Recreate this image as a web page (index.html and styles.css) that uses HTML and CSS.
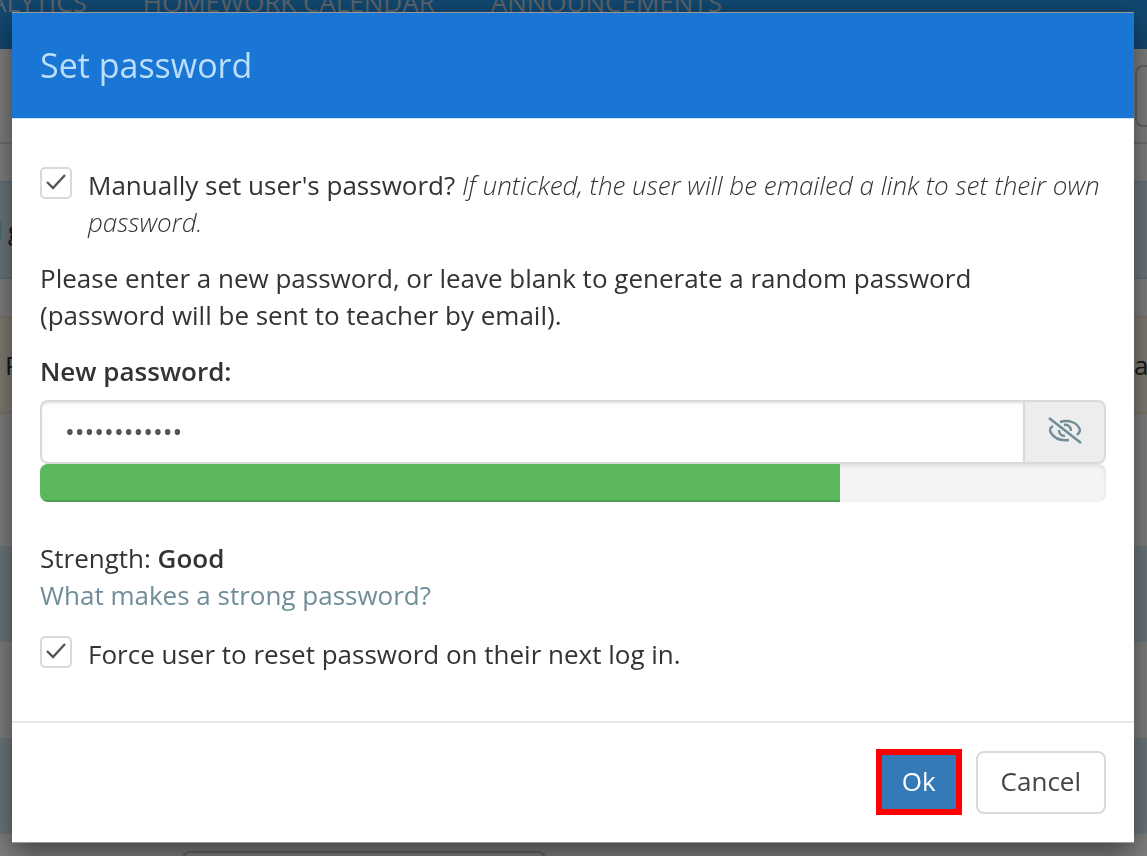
FILE: index.html
```html
<!DOCTYPE html>
<html lang="en">
<head>
  <meta charset="UTF-8">
  <meta name="viewport" content="width=device-width, initial-scale=1.0">
  <title>Set password</title>
  <link rel="stylesheet" href="styles.css">
</head>
<body>
  <div class="page" inert>
    <nav class="navbar">
      <a href="#">Analytics</a>
      <a href="#">Homework Calendar</a>
      <a href="#">Announcements</a>
    </nav>
    <div class="toolbar">
      <button type="button" class="tool" aria-label="More"></button>
    </div>
    <div class="alerts">
      <div class="alert info"><span class="dot"></span><span>g</span></div>
      <div class="alert warning"><span>P</span><span>ar</span></div>
    </div>
    <div class="stripes">
      <div></div>
      <div></div>
      <div></div>
    </div>
    <div class="field"></div>
  </div>

  <div class="backdrop">
    <form class="modal" role="dialog" aria-labelledby="title" onsubmit="return false">
      <header class="modal-header">
        <h1 id="title">Set password</h1>
      </header>

      <div class="modal-body">
        <div class="check">
          <span class="box">
            <input type="checkbox" id="manual" checked>
            <svg viewBox="0 0 32 32"><path d="M7 15l6 6L25 8"/></svg>
          </span>
          <label for="manual">Manually set user's password? <em>If unticked, the user will be emailed a link to set their own password.</em></label>
        </div>

        <p class="help">Please enter a new password, or leave blank to generate a random password<br>(password will be sent to teacher by email).</p>

        <label class="label" for="password">New password:</label>
        <div class="input-group">
          <input type="password" id="password" value="abcdefghijkl">
          <button type="button" id="toggle" aria-label="Show password">
            <svg viewBox="0 0 34 28">
              <path d="M1 1l32 25"/>
              <path d="M12 5c9-3 18 1 20 8 0 2-1 3-3 5"/>
              <path d="M5 9c-3 2-4 4-2 7 4 6 11 8 18 7"/>
              <path d="M16 8c4-1 7 2 7 6"/>
              <path d="M11 13c0 3 2 6 6 6"/>
            </svg>
          </button>
        </div>
        <div class="progress"><div class="bar" style="width: 75%"></div></div>

        <p class="strength">Strength: <strong>Good</strong><br><a href="#">What makes a strong password?</a></p>

        <div class="check">
          <span class="box">
            <input type="checkbox" id="force" checked>
            <svg viewBox="0 0 32 32"><path d="M7 15l6 6L25 8"/></svg>
          </span>
          <label for="force">Force user to reset password on their next log in.</label>
        </div>
      </div>

      <footer class="modal-footer">
        <button type="submit" class="btn ok">Ok</button>
        <button type="button" class="btn cancel">Cancel</button>
      </footer>
    </form>
  </div>

  <script>
    const password = document.getElementById("password");

    document.getElementById("toggle").onclick = () => {
      password.type = password.type === "password" ? "text" : "password";
    };
  </script>
</body>
</html>
```
FILE: styles.css
```css
* {
  box-sizing: border-box;
}

body {
  margin: 0;
  font-family: "Open Sans", sans-serif;
  font-size: 26px;
  line-height: 37px;
  color: #333;
}

/* page behind the dialog */
.page {
  height: 100vh;
  overflow: hidden;
  background: #fff;
}

.navbar {
  display: flex;
  gap: 56px;
  height: 49px;
  margin-left: -46px;
  background: #2490e0;
}

.navbar a {
  margin-top: -16px;
  text-transform: uppercase;
  text-decoration: none;
  white-space: nowrap;
  color: #b8c8d4;
}

.toolbar {
  display: flex;
  justify-content: flex-end;
  height: 95px;
  padding-top: 16px;
  border-bottom: 2px solid #ddd;
}

.tool {
  width: 60px;
  height: 62px;
  margin-right: -48px;
  background: #fff;
  border: 2px solid #ccc;
  border-radius: 8px;
}

.alerts {
  display: flex;
  flex-direction: column;
  gap: 37px;
  padding: 37px 0 132px;
}

.alert {
  display: flex;
  align-items: center;
  height: 98px;
  border: 2px solid transparent;
  border-width: 2px 0;
}

.alert.info {
  background: #d9edf7;
  border-color: #bce8f1;
}

.alert.warning {
  justify-content: space-between;
  padding-left: 5px;
  margin-right: -12px;
  background: #fcf8e3;
  border-color: #faebcc;
}

.dot {
  width: 12px;
  height: 24px;
  margin: 0 6px 0 -10px;
  background: #9fe0f0;
  border-radius: 6px;
}

.stripes div {
  height: 96px;
}

.stripes div:nth-child(odd) {
  background: #d9edf7;
}

.field {
  width: 364px;
  height: 60px;
  margin: 17px 0 0 182px;
  border: 2px solid #ccc;
  border-radius: 8px;
}

/* dialog */
.backdrop {
  position: fixed;
  inset: 0;
  padding: 12px 13px 12px 12px;
  overflow: hidden;
  background: rgba(0, 0, 0, 0.5);
}

.modal {
  background: #fff;
  border: 1px solid #999;
  border-width: 1px 0;
  box-shadow: 0 10px 28px rgba(0, 0, 0, 0.5);
}

.modal-header {
  padding: 28px;
  background: #1a76d4;
  border-bottom: 1px solid #cfe2f5;
}

.modal-header h1 {
  margin: 0;
  font-size: 34px;
  font-weight: 400;
  line-height: 49px;
  color: #bbdefb;
}

.modal-body {
  padding: 48px 28px;
}

.check {
  display: flex;
  gap: 16px;
}

.box {
  display: grid;
  flex: none;
  width: 32px;
  height: 32px;
}

.box input,
.box svg {
  grid-area: 1 / 1;
  width: 100%;
  height: 100%;
  margin: 0;
}

.box input {
  appearance: none;
  border: 2px solid #d9d9d9;
  border-radius: 5px;
  background: #fff;
}

.box svg {
  visibility: hidden;
  pointer-events: none;
  fill: none;
  stroke: #555;
  stroke-width: 2.4;
}

.box input:checked + svg {
  visibility: visible;
}

.check em {
  font-weight: 300;
}

.help {
  margin: 19px 0;
}

.label {
  display: block;
  margin-bottom: 10px;
  font-weight: 600;
}

strong {
  font-weight: 600;
}

.input-group {
  display: flex;
  height: 64px;
}

.input-group input {
  flex: 1;
  min-width: 0;
  padding: 0 23px 2px;
  font: inherit;
  color: #555;
  border: 2px solid #d9d9d9;
  border-right: 0;
  border-radius: 8px 0 0 8px;
  box-shadow: inset 0 2px 2px rgba(0, 0, 0, 0.08);
}

.input-group button {
  display: flex;
  align-items: center;
  justify-content: center;
  width: 83px;
  padding: 0 0 2px;
  background: #ededed;
  border: 2px solid #d9d9d9;
  border-radius: 0 8px 8px 0;
}

.input-group svg {
  width: 34px;
  height: 28px;
  fill: none;
  stroke: #6f8d98;
  stroke-width: 2.4;
}

.progress {
  height: 38px;
  margin-bottom: 38px;
  overflow: hidden;
  background: #f4f4f4;
  border-radius: 8px;
  box-shadow: inset 0 2px 4px rgba(0, 0, 0, 0.1);
}

.bar {
  height: 100%;
  background: #5cb85c;
  box-shadow: inset 0 -2px 0 rgba(0, 0, 0, 0.15);
}

.strength {
  margin: 0 0 22px;
}

.strength a {
  color: #6f8d98;
  text-decoration: none;
}

.modal-footer {
  display: flex;
  align-items: center;
  justify-content: flex-end;
  gap: 14px;
  padding: 26px 28px 27px;
  border-top: 2px solid #e8e8e8;
}

.btn {
  padding: 10px 23px 12px;
  font: inherit;
  line-height: 37px;
  border: 2px solid #d9d9d9;
  border-radius: 8px;
  background: #fff;
  color: #444;
  cursor: pointer;
}

.btn.ok {
  padding: 8px 20px 9px;
  color: #fff;
  background: #337ab7;
  border: 6px solid #f00;
  border-radius: 0;
}
```
